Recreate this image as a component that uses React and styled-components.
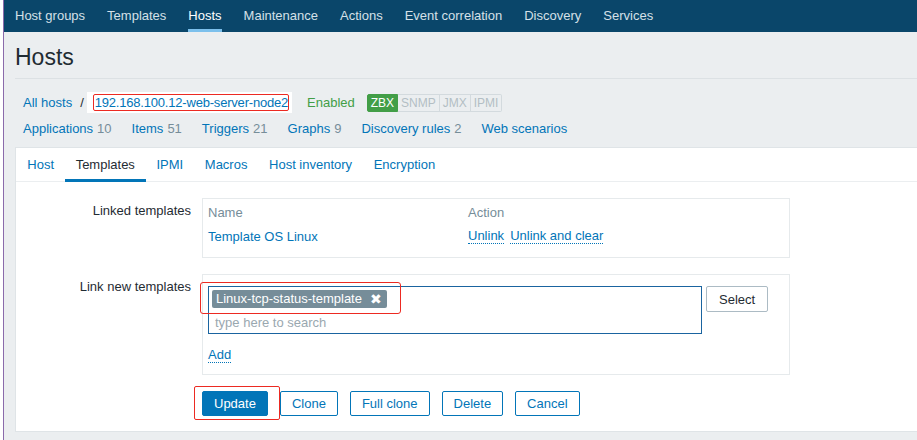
import styled, { createGlobalStyle } from 'styled-components'

const GlobalStyle = createGlobalStyle`
  body {
    margin: 0;
    background: #ebeef0;
    font-family: "Liberation Sans", Arial, sans-serif;
    font-size: 13px;
    color: #1f2c33;
  }
`

const menu = ['Host groups', 'Templates', 'Hosts', 'Maintenance', 'Actions', 'Event correlation', 'Discovery', 'Services']
const hostLinks = [
  { label: 'Applications', count: 10 },
  { label: 'Items', count: 51 },
  { label: 'Triggers', count: 21 },
  { label: 'Graphs', count: 9 },
  { label: 'Discovery rules', count: 2 },
  { label: 'Web scenarios' },
]
const tabs = ['Host', 'Templates', 'IPMI', 'Macros', 'Host inventory', 'Encryption']
const interfaces = ['ZBX', 'SNMP', 'JMX', 'IPMI']

export default function App() {
  return (
    <Frame>
      <GlobalStyle />
      <Main>
        <TopNav>
          {menu.map((item) => (
            <NavItem key={item} $active={item === 'Hosts'}>{item}</NavItem>
          ))}
        </TopNav>

        <Header>
          <PageTitle>Hosts</PageTitle>

          <HostNav>
            <BreadcrumbRow>
              <Link>All hosts</Link>
              <Separator>/</Separator>
              <CurrentCrumb>
                <Marked>192.168.100.12-web-server-node2</Marked>
              </CurrentCrumb>
              <Status>Enabled</Status>
              <Badges>
                {interfaces.map((name, i) => (
                  <Badge key={name} $on={name === 'ZBX'} $first={i === 0} $last={i === interfaces.length - 1}>
                    {name}
                  </Badge>
                ))}
              </Badges>
            </BreadcrumbRow>

            <LinksRow>
              {hostLinks.map((l) => (
                <span key={l.label}>
                  <Link>{l.label}</Link>
                  {l.count !== undefined && <Count>{l.count}</Count>}
                </span>
              ))}
            </LinksRow>
          </HostNav>

          <Panel>
            <TabBar>
              {tabs.map((t) => (
                <Tab key={t} $active={t === 'Templates'}>{t}</Tab>
              ))}
            </TabBar>

            <Form>
              <FieldLabel>Linked templates</FieldLabel>
              <LinkedBox>
                <TemplateTable>
                  <HeadCell>Name</HeadCell>
                  <HeadCell>Action</HeadCell>
                  <Cell><Link>Template OS Linux</Link></Cell>
                  <Cell>
                    <ActionLink>Unlink</ActionLink>
                    <ActionLink>Unlink and clear</ActionLink>
                  </Cell>
                </TemplateTable>
              </LinkedBox>

              <FieldLabel>Link new templates</FieldLabel>
              <NewBox>
                <PickerRow>
                  <MultiSelect>
                    <Tag>
                      Linux-tcp-status-template
                      <RemoveIcon>✖</RemoveIcon>
                    </Tag>
                    <SearchInput placeholder="type here to search" readOnly />
                    <Highlight />
                  </MultiSelect>
                  <SelectButton>Select</SelectButton>
                </PickerRow>
                <AddRow>
                  <ActionLink>Add</ActionLink>
                </AddRow>
              </NewBox>

              <ButtonRow>
                <MarkedButton>
                  <Button $primary>Update</Button>
                </MarkedButton>
                <Button>Clone</Button>
                <Button>Full clone</Button>
                <Button>Delete</Button>
                <Button>Cancel</Button>
              </ButtonRow>
            </Form>
          </Panel>
        </Header>
      </Main>
    </Frame>
  )
}

const Frame = styled.div`
  display: flex;
  min-height: 440px;
  border-left: 3px solid #ffffff;
  background: #ebeef0;
`

const Main = styled.div`
  flex: 1;
  min-width: 0;
  border-left: 1px solid #8a6aab;
`

const TopNav = styled.nav`
  display: flex;
  height: 32px;
  background: #0a466a;
`

const NavItem = styled.div`
  box-sizing: border-box;
  height: 32px;
  margin: 0 11px;
  padding-top: 3px;
  line-height: 26px;
  white-space: nowrap;
  color: ${(p) => (p.$active ? '#ffffff' : '#d5e0e8')};
  border-bottom: 3px solid ${(p) => (p.$active ? '#7cc0ec' : 'transparent')};
`

const Header = styled.div`
  padding-left: 11px;
`

const PageTitle = styled.h1`
  margin: 0;
  padding-top: 4px;
  font-size: 23px;
  font-weight: normal;
  line-height: 42px;
  color: #1f2c33;
  border-bottom: 1px solid #dce1e4;
`

const HostNav = styled.div`
  padding-left: 8px;
`

const BreadcrumbRow = styled.div`
  display: flex;
  align-items: center;
  height: 21px;
  margin-top: 13px;
`

const Link = styled.span`
  color: #0275b8;
  white-space: nowrap;
`

const Separator = styled.span`
  margin: 0 3px 0 8px;
  color: #1f2c33;
`

const CurrentCrumb = styled.span`
  box-sizing: border-box;
  display: flex;
  align-items: center;
  height: 21px;
  padding: 0 3px 0 6px;
  background: #ffffff;
`

const Marked = styled.span`
  padding: 0 0 0 1px;
  line-height: 15px;
  letter-spacing: -0.2px;
  color: #0275b8;
  border: 1px solid #ec2a22;
  border-radius: 2px;
`

const Status = styled.span`
  margin-left: 15px;
  color: #429e47;
`

const Badges = styled.span`
  display: flex;
  margin-left: 12px;
`

const Badge = styled.span`
  box-sizing: border-box;
  height: 18px;
  padding: 0 3px;
  font-size: 12px;
  line-height: 16px;
  color: ${(p) => (p.$on ? '#ffffff' : '#b3bec4')};
  background: ${(p) => (p.$on ? '#429e47' : '#ebeef0')};
  border: 1px solid ${(p) => (p.$on ? '#429e47' : '#d3dade')};
  border-left-width: ${(p) => (p.$first || p.$on ? '1px' : '0')};
  border-radius: ${(p) => (p.$first ? '2px 0 0 2px' : p.$last ? '0 2px 2px 0' : '0')};
`

const LinksRow = styled.div`
  display: flex;
  align-items: center;
  gap: 20px;
  height: 21px;
  margin-top: 5px;
`

const Count = styled.span`
  margin-left: 4px;
  color: #768d99;
`

const Panel = styled.section`
  margin-top: 8px;
  padding-bottom: 15px;
  background: #ffffff;
  border: 1px solid #dfe4e7;
  border-right: 0;
`

const TabBar = styled.div`
  display: flex;
  padding-left: 0.5px;
  border-bottom: 1px solid #ebeef0;
`

const Tab = styled.div`
  box-sizing: border-box;
  height: 34px;
  margin-bottom: -1px;
  padding: 2px 10.8px 0;
  line-height: 29px;
  color: ${(p) => (p.$active ? '#1f2c33' : '#0275b8')};
  border-bottom: 3px solid ${(p) => (p.$active ? '#0275b8' : 'transparent')};
`

const Form = styled.div`
  display: grid;
  grid-template-columns: 175px 588px;
  column-gap: 11px;
  row-gap: 16px;
  align-items: start;
  padding-top: 16px;
`

const FieldLabel = styled.div`
  padding-top: 4px;
  line-height: 18px;
  text-align: right;
  white-space: nowrap;
`

const LinkedBox = styled.div`
  padding: 3px 5px 9px;
  border: 1px solid #e6eaec;
`

const TemplateTable = styled.div`
  display: grid;
  grid-template-columns: 260px 1fr;
`

const HeadCell = styled.div`
  line-height: 22px;
  color: #768d99;
`

const Cell = styled.div`
  display: flex;
  align-items: center;
  gap: 6px;
  height: 24px;
`

const ActionLink = styled.span`
  line-height: 15px;
  color: #0275b8;
  border-bottom: 1px dotted #0275b8;
`

const NewBox = styled.div`
  padding: 11px 5px 11px;
  border: 1px solid #e6eaec;
`

const PickerRow = styled.div`
  display: flex;
  align-items: flex-start;
  gap: 4px;
`

const MultiSelect = styled.div`
  position: relative;
  box-sizing: border-box;
  width: 494px;
  height: 48px;
  padding: 3px 3px 0;
  border: 1px solid #1a64a0;
`

const Tag = styled.span`
  display: inline-flex;
  align-items: center;
  gap: 8px;
  height: 18px;
  padding: 0 5px 0 4px;
  line-height: 18px;
  color: #ffffff;
  background: #768d99;
  border-radius: 2px;
  white-space: nowrap;
`

const RemoveIcon = styled.span`
  font-size: 14px;
  line-height: 18px;
`

const SearchInput = styled.input`
  display: block;
  box-sizing: border-box;
  width: 100%;
  height: 23px;
  margin-top: 3px;
  padding: 0 0 0 3px;
  border: 0;
  outline: none;
  font: inherit;
  color: #1f2c33;
  background: transparent;

  &::placeholder {
    color: #9aa8b0;
  }
`

const Highlight = styled.span`
  position: absolute;
  left: -9px;
  top: -5px;
  width: 199px;
  height: 30px;
  border: 1px solid #ec2a22;
  border-radius: 3px;
  pointer-events: none;
`

const SelectButton = styled.button`
  height: 26px;
  padding: 0 12px;
  font: inherit;
  color: #1f2c33;
  background: #ffffff;
  border: 1px solid #acbbc4;
  border-radius: 2px;
`

const AddRow = styled.div`
  display: flex;
  margin-top: 13px;
  line-height: 18px;
`

const ButtonRow = styled.div`
  grid-column: 2;
  display: flex;
  gap: 12px;
`

const MarkedButton = styled.span`
  position: relative;
  display: flex;

  &::after {
    content: '';
    position: absolute;
    left: -8px;
    top: -5px;
    right: -12px;
    bottom: -4px;
    border: 1px solid #ec2a22;
    border-radius: 2px;
    pointer-events: none;
  }
`

const Button = styled.button`
  height: 25px;
  padding: 0 11px;
  font: inherit;
  color: ${(p) => (p.$primary ? '#ffffff' : '#0275b8')};
  background: ${(p) => (p.$primary ? '#0275b8' : '#ffffff')};
  border: 1px solid #0275b8;
  border-radius: 2px;
`
